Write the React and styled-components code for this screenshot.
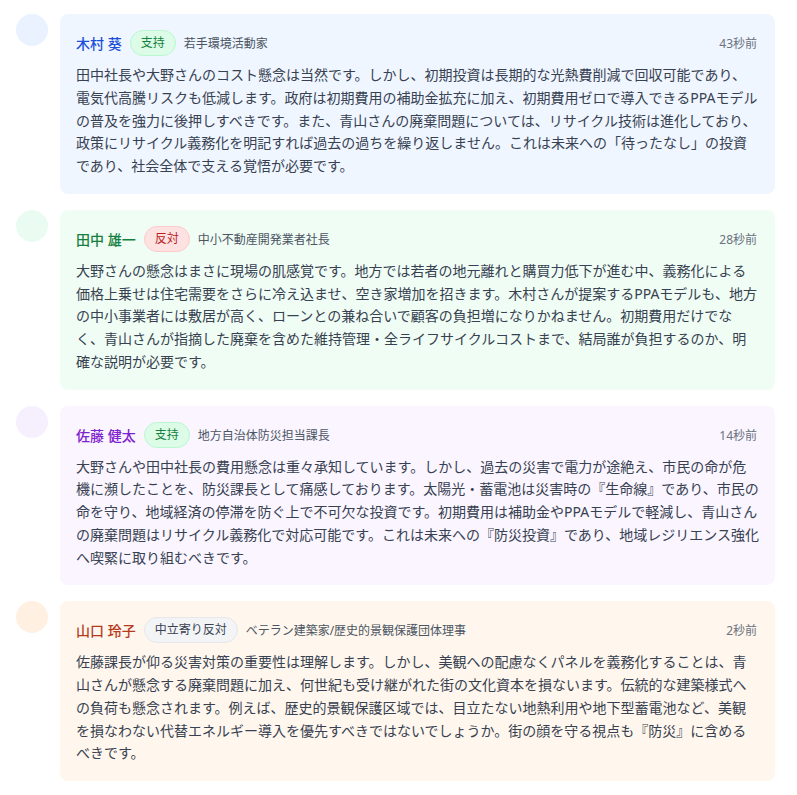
import React from "react";
import styled, { createGlobalStyle } from "styled-components";

const GlobalStyle = createGlobalStyle`
  html, body {
    margin: 0;
    padding: 0;
    background: #ffffff;
  }
  body {
    font-family: "Noto Sans", "Noto Sans CJK JP", sans-serif;
    color: #374151;
  }
`;

const tones = {
  blue: { card: "#eff6ff", avatar: "#e9f2fe", name: "#1d4ed8" },
  green: { card: "#f0fdf4", avatar: "#eafcf1", name: "#15803d" },
  purple: { card: "#faf5ff", avatar: "#f6effd", name: "#7e22ce" },
  orange: { card: "#fff7ed", avatar: "#fff0e2", name: "#b83a1e" },
};

const stances = {
  support: { bg: "#dcfce7", border: "#bbf7d0", color: "#15803d" },
  oppose: { bg: "#fee2e2", border: "#fecaca", color: "#b91c1c" },
  neutral: { bg: "#f3f4f6", border: "#e5e7eb", color: "#374151" },
};

const Feed = styled.div`
  display: flex;
  flex-direction: column;
  gap: 16px;
  padding: 14px 22px 16px 16px;
`;

const Row = styled.div`
  display: flex;
  align-items: flex-start;
  gap: 12px;
`;

const Avatar = styled.div`
  flex: none;
  width: 32px;
  height: 32px;
  border-radius: 50%;
  background: ${(p) => tones[p.$tone].avatar};
`;

const Card = styled.div`
  flex: 1;
  min-width: 0;
  background: ${(p) => tones[p.$tone].card};
  border-radius: 8px;
  padding: 16px;
`;

const Header = styled.div`
  display: flex;
  align-items: center;
  gap: 8px;
  height: 26px;
`;

const Name = styled.span`
  font-size: 14px;
  font-weight: 500;
  color: ${(p) => tones[p.$tone].name};
`;

const Badge = styled.span`
  font-size: 12px;
  line-height: 16px;
  padding: 4px 10px;
  border-radius: 999px;
  background: ${(p) => stances[p.$stance].bg};
  border: 1px solid ${(p) => stances[p.$stance].border};
  color: ${(p) => stances[p.$stance].color};
`;

const Role = styled.span`
  font-size: 12px;
  color: #4b5563;
`;

const Time = styled.span`
  margin-left: auto;
  font-size: 12px;
  color: #6b7280;
  padding-right: 2px;
`;

const Body = styled.p`
  margin: 8px 0 0;
  font-size: 14px;
  line-height: 1.625;
  color: #374151;
`;

const posts = [
  {
    tone: "blue",
    name: "木村 葵",
    stance: "support",
    stanceLabel: "支持",
    role: "若手環境活動家",
    time: "43秒前",
    text: "田中社長や大野さんのコスト懸念は当然です。しかし、初期投資は長期的な光熱費削減で回収可能であり、電気代高騰リスクも低減します。政府は初期費用の補助金拡充に加え、初期費用ゼロで導入できるPPAモデルの普及を強力に後押しすべきです。また、青山さんの廃棄問題については、リサイクル技術は進化しており、政策にリサイクル義務化を明記すれば過去の過ちを繰り返しません。これは未来への「待ったなし」の投資であり、社会全体で支える覚悟が必要です。",
  },
  {
    tone: "green",
    name: "田中 雄一",
    stance: "oppose",
    stanceLabel: "反対",
    role: "中小不動産開発業者社長",
    time: "28秒前",
    text: "大野さんの懸念はまさに現場の肌感覚です。地方では若者の地元離れと購買力低下が進む中、義務化による価格上乗せは住宅需要をさらに冷え込ませ、空き家増加を招きます。木村さんが提案するPPAモデルも、地方の中小事業者には敷居が高く、ローンとの兼ね合いで顧客の負担増になりかねません。初期費用だけでなく、青山さんが指摘した廃棄を含めた維持管理・全ライフサイクルコストまで、結局誰が負担するのか、明確な説明が必要です。",
  },
  {
    tone: "purple",
    name: "佐藤 健太",
    stance: "support",
    stanceLabel: "支持",
    role: "地方自治体防災担当課長",
    time: "14秒前",
    text: "大野さんや田中社長の費用懸念は重々承知しています。しかし、過去の災害で電力が途絶え、市民の命が危機に瀕したことを、防災課長として痛感しております。太陽光・蓄電池は災害時の『生命線』であり、市民の命を守り、地域経済の停滞を防ぐ上で不可欠な投資です。初期費用は補助金やPPAモデルで軽減し、青山さんの廃棄問題はリサイクル義務化で対応可能です。これは未来への『防災投資』であり、地域レジリエンス強化へ喫緊に取り組むべきです。",
  },
  {
    tone: "orange",
    name: "山口 玲子",
    stance: "neutral",
    stanceLabel: "中立寄り反対",
    role: "ベテラン建築家/歴史的景観保護団体理事",
    time: "2秒前",
    text: "佐藤課長が仰る災害対策の重要性は理解します。しかし、美観への配慮なくパネルを義務化することは、青山さんが懸念する廃棄問題に加え、何世紀も受け継がれた街の文化資本を損ないます。伝統的な建築様式への負荷も懸念されます。例えば、歴史的景観保護区域では、目立たない地熱利用や地下型蓄電池など、美観を損なわない代替エネルギー導入を優先すべきではないでしょうか。街の顔を守る視点も『防災』に含めるべきです。",
  },
];

export default function App() {
  return (
    <>
      <GlobalStyle />
      <Feed>
        {posts.map((p) => (
          <Row key={p.name}>
            <Avatar $tone={p.tone} />
            <Card $tone={p.tone}>
              <Header>
                <Name $tone={p.tone}>{p.name}</Name>
                <Badge $stance={p.stance}>{p.stanceLabel}</Badge>
                <Role>{p.role}</Role>
                <Time>{p.time}</Time>
              </Header>
              <Body>{p.text}</Body>
            </Card>
          </Row>
        ))}
      </Feed>
    </>
  );
}
